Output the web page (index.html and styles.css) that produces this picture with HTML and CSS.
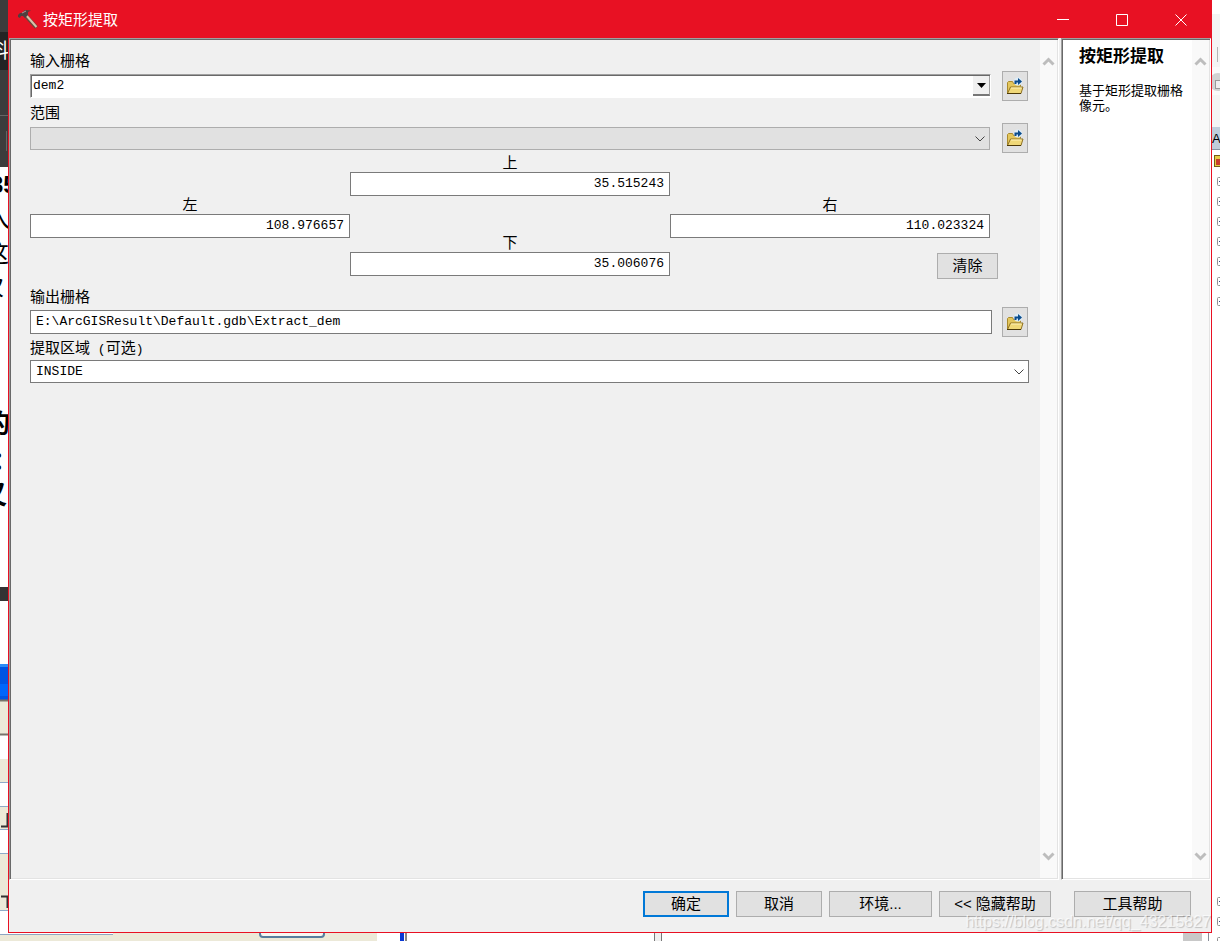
FILE: index.html
```html
<!DOCTYPE html>
<html lang="zh-CN">
<head>
<meta charset="utf-8">
<title>按矩形提取</title>
<link rel="stylesheet" href="styles.css">
</head>
<body>
<svg class="symbols" aria-hidden="true">
  <symbol id="folder" viewBox="0 0 18 18">
    <path d="M1.500 16.500V5.500l1-1h4l1 2h7v3" fill="#e3c65c" stroke="#a98a2c"/>
    <path d="M1.500 16.500l3-6.500h12.500l-2 6.500z" fill="#f0d878" stroke="#8f7224"/>
    <path d="M5 11h10.500" stroke="#fff2b8"/>
    <path d="M1 16.500h14" stroke="#4c3808"/>
    <circle cx="12" cy="4.500" r="4" fill="#dcecf7"/>
    <path d="M9.500 7V4.500h4" fill="none" stroke="#0a4b8c" stroke-width="2"/>
    <path d="M12 1l4 3.500-4 3.500z" fill="#0a4b8c"/>
  </symbol>
  <symbol id="chevron" viewBox="0 0 10 6"><path d="M.5.5L5 5 9.500.5" fill="none" stroke="#444"/></symbol>
  <symbol id="scroll-up" viewBox="0 0 12 9"><path d="M1 7.500l5-5 5 5" fill="none" stroke="#bdbdbd" stroke-width="3"/></symbol>
  <symbol id="scroll-down" viewBox="0 0 12 9"><path d="M1 1.500l5 5 5-5" fill="none" stroke="#bdbdbd" stroke-width="3"/></symbol>
  <symbol id="node" viewBox="0 0 9 9"><rect x=".5" y=".5" width="8" height="8" rx="1" fill="#fff" stroke="#929292"/><path d="M2 4.500h5" stroke="#34488c"/></symbol>
</svg>
<div class="desktop">
  <svg class="behind-left" aria-hidden="true">
    <rect width="8" height="167" fill="#3c3c3c"/>
    <rect y="32" width="8" height="38" fill="#242424"/>
    <path d="M0 115.500h8M6.500 131v20" stroke="#666"/>
    <text x="-11" y="58" class="tab-text">料</text>
    <g class="article-text">
      <text x="-10" y="193" class="digits">35</text>
      <text x="-14" y="227">入</text>
      <text x="-15" y="262">这</text>
      <text x="-20" y="295">次</text>
    </g>
    <g class="article-text strong">
      <text x="-16" y="433">的</text>
      <text x="-8" y="470">：</text>
      <text x="-19" y="504">又</text>
    </g>
    <rect y="587" width="8" height="14" fill="#333"/>
    <rect y="664" width="8" height="36" fill="#0054e3"/>
    <rect y="664" width="8" height="3" fill="#2c8cf7"/>
    <rect y="684" width="8" height="12" fill="#0066fb"/>
    <rect y="700" width="8" height="35" fill="#ece9d8"/>
    <path d="M0 700.500h8M0 734.500h8" stroke="#77746b" stroke-width="2"/>
    <rect y="759" width="8" height="23" fill="#ece9d8"/>
    <rect y="807" width="8" height="22" fill="#ece9d8"/>
    <rect y="854" width="8" height="56" fill="#ece9d8"/>
    <path d="M0 782.500h8M0 806.500h8M0 829.500h8M0 853.500h8M0 910.500h8" stroke="#8eabc8"/>
    <path d="M1 826.500h7M7.500 813v13M1 896.500h7M7.500 896v12" stroke="#333" stroke-width="2"/>
  </svg>

  <main class="dialog">
    <header class="titlebar">
      <svg class="hammer" viewBox="0 0 20 20" aria-hidden="true">
        <path d="M7 5l11.500 12.500" stroke="#69493c" stroke-width="4"/>
        <path d="M8 5l10.500 12" stroke="#d8c3ab" stroke-width="2"/>
        <path d="M0 5l2-2 2 0 3-3 6 .5-3 1.500 0 3-3 3-2-2-2 0-1 2-2-1z" fill="#503e3e"/>
        <path d="M4 3l4-2" stroke="#a89999"/>
      </svg>
      <h1>按矩形提取</h1>
      <button class="window-button" aria-label="最小化"><svg viewBox="0 0 12 12"><path d="M0 5.500h12"/></svg></button>
      <button class="window-button" aria-label="最大化"><svg viewBox="0 0 12 12"><path d="M.5.5h11v11H.5z"/></svg></button>
      <button class="window-button" aria-label="关闭"><svg viewBox="0 0 12 12"><path d="M.5.5l11 11M11.500.5l-11 11"/></svg></button>
    </header>

    <div class="panes">
      <section class="pane">
        <form class="form" id="tool">
          <label for="in">输入栅格</label>
          <div class="row">
            <div class="combo">
              <input id="in" value="dem2">
              <button type="button" aria-label="展开"><svg viewBox="0 0 9 5"><path d="M0 0h9L4.500 5z"/></svg></button>
            </div>
            <button type="button" class="browse" aria-label="浏览"><svg><use href="#folder"/></svg></button>
          </div>

          <label class="next" for="extent">范围</label>
          <div class="row">
            <div class="select short">
              <select id="extent" disabled><option></option></select>
              <svg><use href="#chevron"/></svg>
            </div>
            <button type="button" class="browse" aria-label="浏览"><svg><use href="#folder"/></svg></button>
          </div>

          <div class="extent">
            <div class="side">
              <label for="left">左</label>
              <input id="left" value="108.976657">
            </div>
            <div class="middle">
              <label for="top">上</label>
              <input id="top" value="35.515243">
              <label class="bottom" for="bottom">下</label>
              <input id="bottom" value="35.006076">
            </div>
            <div class="side">
              <label for="right">右</label>
              <input id="right" value="110.023324">
              <button type="button" class="button clear">清除</button>
            </div>
          </div>

          <label class="output" for="out">输出栅格</label>
          <div class="row wide">
            <input id="out" value="E:\ArcGISResult\Default.gdb\Extract_dem">
            <button type="button" class="browse" aria-label="浏览"><svg><use href="#folder"/></svg></button>
          </div>

          <label class="last" for="area">提取区域<span class="mono"> (</span>可选<span class="mono">)</span></label>
          <div class="select">
            <select id="area"><option>INSIDE</option></select>
            <svg><use href="#chevron"/></svg>
          </div>
        </form>
        <div class="scrollbar"><svg><use href="#scroll-up"/></svg><svg><use href="#scroll-down"/></svg></div>
      </section>

      <aside class="pane help">
        <div class="help-text">
          <h2>按矩形提取</h2>
          <p>基于矩形提取栅格像元。</p>
        </div>
        <div class="scrollbar"><svg><use href="#scroll-up"/></svg><svg><use href="#scroll-down"/></svg></div>
      </aside>
    </div>

    <footer class="actions">
      <button class="button ok" form="tool" type="button">确定</button>
      <button class="button cancel">取消</button>
      <button class="button environment">环境...</button>
      <button class="button hide-help">&lt;&lt; 隐藏帮助</button>
      <button class="button tool-help">工具帮助</button>
      <span class="watermark">https://blog.csdn.net/qq_43215827</span>
    </footer>
  </main>

  <svg class="behind-right" aria-hidden="true">
    <rect y="14" width="8" height="113" fill="#f4f4f4"/>
    <rect y="67" width="8" height="28" fill="#fafafa"/>
    <path d="M5.500 47v15" stroke="#b4b4b4"/>
    <circle cx="6" cy="82" r="9" fill="#d2d2d2"/>
    <rect x="3.500" y="80.500" width="9" height="8" fill="#eee" stroke="#999"/>
    <rect y="127" width="8" height="23" fill="#bfcddb"/>
    <path d="M0 149.500h8" stroke="#8793a3"/>
    <text x="0" y="143" class="panel-text">A</text>
    <rect x="2.500" y="155.500" width="12" height="11" fill="#e5cb45" stroke="#765b18"/>
    <rect x="4" y="159" width="8" height="6" fill="#c83c2c"/>
    <g>
      <use href="#node" x="5" y="177" width="9" height="9"/>
      <use href="#node" x="5" y="197" width="9" height="9"/>
      <use href="#node" x="5" y="217" width="9" height="9"/>
      <use href="#node" x="5" y="237" width="9" height="9"/>
      <use href="#node" x="5" y="257" width="9" height="9"/>
      <use href="#node" x="5" y="277" width="9" height="9"/>
      <use href="#node" x="5" y="297" width="9" height="9"/>
      <use href="#node" x="5" y="897" width="9" height="9"/>
      <use href="#node" x="5" y="917" width="9" height="9"/>
    </g>
  </svg>

  <svg class="behind-bottom" aria-hidden="true">
    <rect width="377" height="8" fill="#ece9d8"/>
    <rect width="113" height="1" fill="#fff"/>
    <path d="M0 1.500h113" stroke="#8ea6c2"/>
    <path d="M260 0v1q0 3 3 3h58q3 0 3-3V0" fill="#f8f7f2" stroke="#587d9d" stroke-width="2"/>
    <rect x="400" width="4" height="8" fill="#0838d4"/>
    <path d="M406 0v8" stroke="#858585" stroke-width="2"/>
    <rect x="654" width="8" height="8" fill="#efefef"/>
    <path d="M654.500 0v8M661.500 0v8" stroke="#777"/>
    <rect x="1183" width="19" height="8" fill="#c8c8c8"/>
    <path d="M1208.500 0v8" stroke="#888c98"/>
    <use href="#node" x="1217" y="4" width="9" height="9"/>
  </svg>
</div>
</body>
</html>
```
FILE: styles.css
```css
* { box-sizing: border-box; }

body {
  margin: 0;
  background: #fff;
  color: #000;
  font: 15px/20px "Liberation Sans", "Noto Sans CJK SC", sans-serif;
}

button, input, select {
  margin: 0;
  border-radius: 0;
  color: #000;
  font: inherit;
}

svg { display: block; overflow: hidden; }

.symbols { position: absolute; width: 0; height: 0; }

.desktop {
  display: grid;
  grid-template-columns: 8px minmax(0, 1fr) 8px;
  grid-template-rows: minmax(0, 1fr) 8px;
  height: 100vh;
  overflow: hidden;
}

.behind-left, .behind-right { width: 8px; height: 100%; }
.behind-bottom { grid-column: 1 / -1; width: 100%; height: 8px; }
.tab-text { fill: #fff; font-size: 20px; }
.panel-text { font-size: 13px; }
.article-text { font-size: 24px; }
.article-text .digits { font-weight: bold; }
.article-text.strong { font-size: 26px; font-weight: bold; }

/* Dialog window */
.dialog {
  display: flex;
  flex-direction: column;
  border: 1px solid #e81123;
  background: #f0f0f0;
}

.titlebar {
  display: flex;
  align-items: center;
  height: 37px;
  padding: 0 1px 0 9px;
  background: #e81123;
  color: #fff;
}

.titlebar h1 {
  flex: 1;
  margin: 0 0 0 5px;
  font-size: 15px;
  font-weight: normal;
}

.hammer { width: 20px; height: 20px; }

.window-button {
  display: grid;
  place-items: center;
  width: 59px;
  height: 36px;
  padding: 0;
  border: 0;
  background: transparent;
}

.window-button svg {
  width: 12px;
  height: 12px;
  fill: none;
  stroke: #fff;
}

.panes {
  display: grid;
  flex: 1;
  grid-template-columns: minmax(0, 1fr) 150px;
  gap: 2px;
  min-height: 0;
}

.pane {
  display: flex;
  border: 1px solid;
  border-color: #a0a0a0 #fff #fff #a0a0a0;
  box-shadow: inset 1px 1px #696969, inset -1px -1px #e3e3e3;
  padding: 1px;
}

.form { flex: 1; min-width: 0; padding: 11px 11px 0 19px; }

.scrollbar {
  display: flex;
  flex-direction: column;
  justify-content: space-between;
  align-items: center;
  width: 17px;
  padding: 17px 0;
  background: #f9f9f9;
}

.scrollbar svg { width: 13px; height: 9px; }

/* Form fields */
label { display: block; }
.next { margin-top: 2px; }
.output { margin-top: 8px; }
.last { margin-top: 1px; }

.mono {
  font-family: "Liberation Mono", monospace;
  font-size: 13px;
  white-space: pre;
}

input, select {
  width: 100%;
  height: 24px;
  padding: 0 5px;
  border: 1px solid #7a7a7a;
  background: #fff;
  font-family: "Liberation Mono", monospace;
  font-size: 13px;
}

input { padding-bottom: 2px; }

.row {
  display: grid;
  grid-template-columns: minmax(0, 1fr) 26px;
  align-items: center;
  gap: 11px;
  padding-right: 1px;
}

.row.wide { gap: 10px; }

.combo {
  display: flex;
  height: 24px;
  border: 1px solid;
  border-color: #a0a0a0 #fff #fff #a0a0a0;
  box-shadow: inset 1px 1px #696969;
  background: #fff;
  padding: 1px 0 0 1px;
}

.combo input {
  flex: 1;
  height: 20px;
  padding: 0 1px;
  border: 0;
}

.combo button {
  display: grid;
  place-items: center;
  width: 17px;
  height: 20px;
  padding: 0;
  border: 0;
  border-bottom: 2px solid #777;
  border-right: 1px solid #a0a0a0;
  background: #f0f0f0;
}

.combo svg { width: 9px; height: 5px; }

.browse {
  display: grid;
  place-items: center;
  height: 30px;
  padding: 0;
  border: 1px solid #adadad;
  background: #e1e1e1;
}

.browse svg { width: 18px; height: 18px; }

.select { position: relative; }
.select.short { margin-right: 1px; }
.select select { display: block; height: 23px; appearance: none; }
.select select:disabled { border-color: #adadad; background: #e1e1e1; opacity: 1; }

.select svg {
  position: absolute;
  top: 9px;
  right: 5px;
  width: 10px;
  height: 6px;
  pointer-events: none;
}

.extent {
  display: grid;
  grid-template-columns: repeat(3, minmax(0, 1fr));
  padding: 1px 39px 0 0;
}

.extent label { line-height: 18px; text-align: center; }
.extent input { display: block; text-align: right; }
.middle .bottom { margin-top: 38px; }

.side {
  display: flex;
  flex-direction: column;
  padding-top: 42px;
}

/* Buttons */
.button {
  height: 26px;
  padding: 0;
  border: 1px solid #adadad;
  background: #e1e1e1;
  white-space: nowrap;
}

.clear { align-self: flex-end; width: 61px; margin: 15px -8px 0 0; }

.actions {
  position: relative;
  display: flex;
  justify-content: flex-end;
  gap: 7px;
  padding: 11px 20px 15px;
}

.ok, .cancel { width: 86px; }
.ok { border: 2px solid #0078d7; }
.environment { width: 103px; }
.hide-help { width: 112px; }
.tool-help { width: 117px; margin-left: 16px; }

.watermark {
  position: absolute;
  right: 0;
  bottom: 0;
  color: rgba(255, 255, 255, 0.7);
  font-size: 16px;
  text-shadow: 1px 1px 1px rgba(0, 0, 0, 0.2);
  pointer-events: none;
}

/* Help pane */
.help { background: #fff; }
.help-text { flex: 1; padding: 6px 7px 0 16px; }

.help h2 {
  margin: 0;
  font-size: 17px;
  line-height: 22px;
  white-space: nowrap;
}

.help p { margin: 15px 0 0; font-size: 13px; line-height: 15px; }
```
